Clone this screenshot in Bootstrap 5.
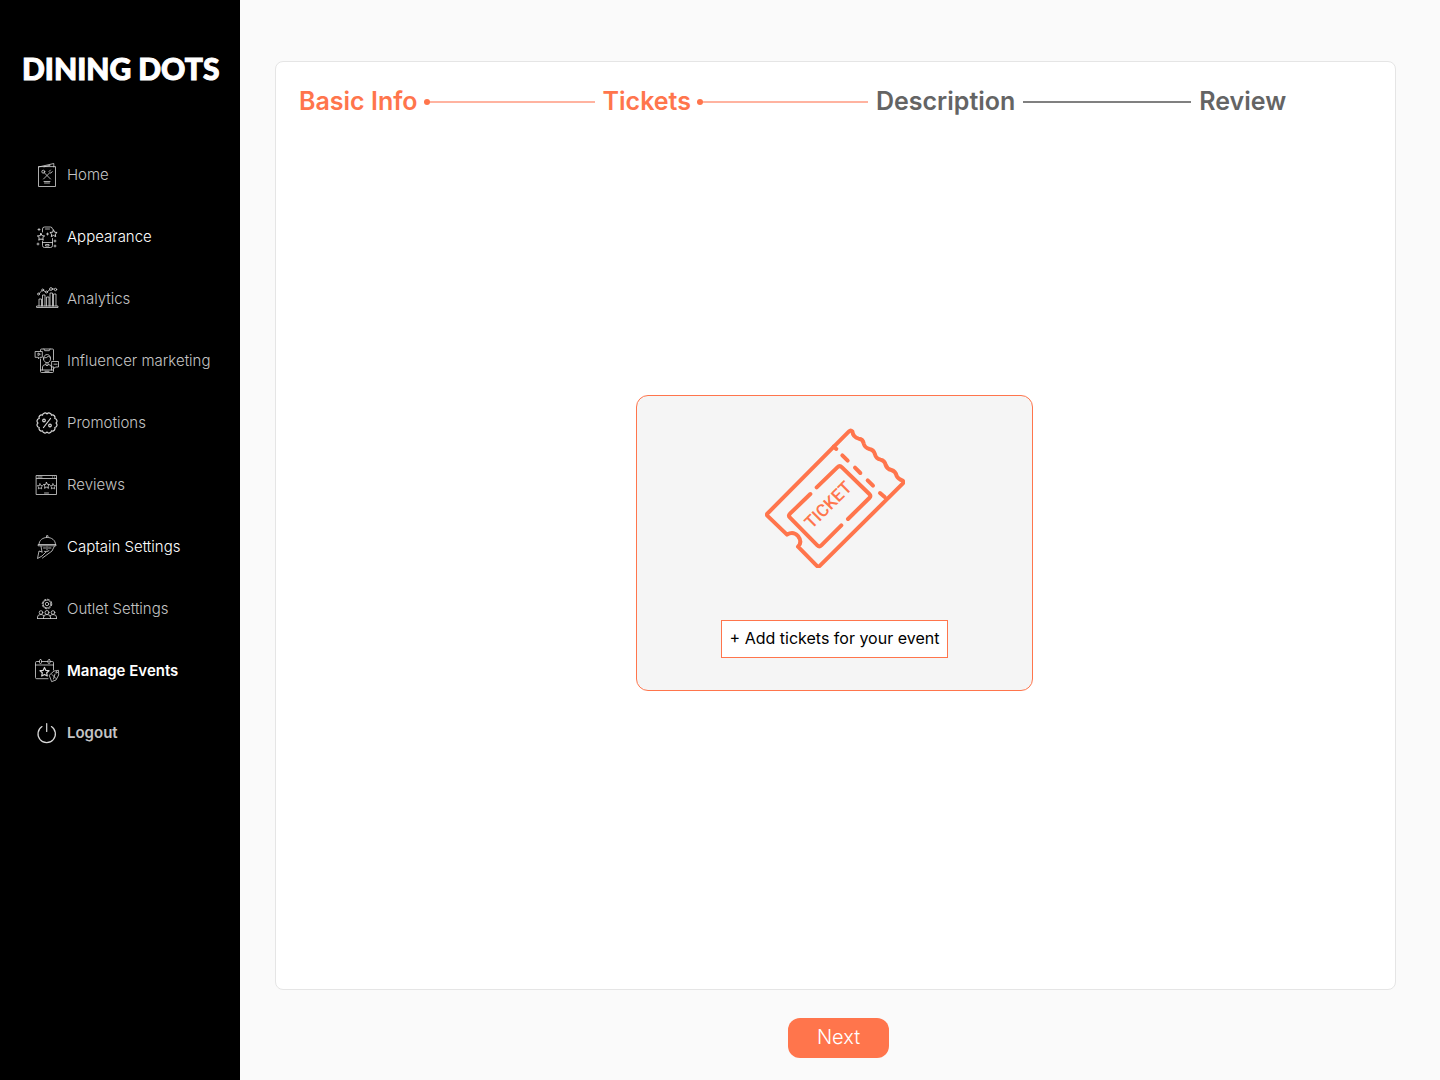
<!DOCTYPE html>
<html lang="en">
<head>
<meta charset="utf-8">
<meta name="viewport" content="width=device-width, initial-scale=1">
<title>Dining Dots – Manage Events</title>
<link rel="stylesheet" href="https://cdn.jsdelivr.net/npm/bootstrap@5.3.0/dist/css/bootstrap.min.css">
<style>
  :root { --brand: #ff754c; --brand-soft: #ffb3a0; }
  body { font-family: Inter, "Liberation Sans", sans-serif; background: #fafafa; }
  .sidebar { width: 240px; background: #000; }
  .brand { font: 900 30px/36px Lato, sans-serif; color: #fff; -webkit-text-stroke: 1px #fff; padding: 50px 22px 58px; white-space: nowrap; }
  .side-link { height: 62px; padding: 0 0 0 34px; gap: 7px; font-size: 15px; font-weight: 300; color: #c4c4c4; }
  .side-link:hover, .side-link.bright { color: #fff; }
  .side-link.strong { font-weight: 600; }
  .side-link svg { width: 26px; height: 26px; flex: none; fill: none; stroke: #d8d8d8; stroke-width: .8; stroke-linecap: round; stroke-linejoin: round; }
  .side-link svg.thick { stroke-width: 1.2; }
  .workspace { padding: 61px 44px 22px 35px; min-width: 0; }
  .panel { border: 1px solid #e5e5e5; border-radius: 8px; padding: 20px 25px 24px 23px; }
  .steps { font-size: 25px; line-height: 38px; font-weight: 600; color: #646464; gap: 8px; }
  .steps .done { color: var(--brand); }
  .connector { flex: 0 1 168px; height: 2px; background: #808080; margin-top: 2px; }
  .connector.dotted { flex-basis: 171px; background: var(--brand-soft); display: flex; align-items: center; margin-left: -2px; }
  .connector.dotted::before { content: ""; width: 6px; height: 6px; border-radius: 50%; background: var(--brand); }
  .ticket-box { width: 397px; height: 296px; border: 1px solid var(--brand); border-radius: 12px; background: #f5f5f5; padding: 32px 0; }
  .ticket-art { width: 140px; height: 140px; fill: none; stroke: var(--brand); stroke-width: 12; stroke-linecap: round; stroke-linejoin: round; }
  .ticket-art text { font: 500 52px Roboto, sans-serif; fill: var(--brand); stroke: none; text-anchor: middle; }
  .add-btn { border: 1px solid var(--brand); background: #fff; color: #000; font-size: 16px; line-height: 24px; padding: 5px 7px 7px; border-radius: 0; min-width: 227px; white-space: nowrap; }
  .next-btn { width: 101px; height: 40px; padding: 0 0 2px; border-radius: 12px; background: var(--brand); color: #fff; font-size: 20px; font-weight: 300; }
  .add-btn:hover { background: #fff4f0; }
  .next-btn:hover { background: #f2663c; color: #fff; }
  .actions { padding: 28px 0 0 6px; }
</style>
<script src="https://cdn.jsdelivr.net/npm/bootstrap@5.3.0/dist/js/bootstrap.bundle.min.js"></script>
</head>
<body>
<svg class="d-none" aria-hidden="true">
  <symbol id="star" viewBox="-5 -5 10 10" overflow="visible"><path stroke-width="1.2" d="M0-4.500 1.400-1.600 4.500-1.300 2.200.8 2.800 4 0 2.400-2.800 4-2.200.8-4.500-1.300-1.400-1.600Z"/></symbol>
</svg>
<div class="d-flex min-vh-100">
  <aside class="sidebar flex-shrink-0">
    <div class="brand">DINING DOTS</div>
    <nav class="nav flex-column flex-nowrap" aria-label="Main">
      <a href="#" class="nav-link side-link d-flex align-items-center"><svg viewBox="0 0 26 26"><path d="M4.500 5v19.500h17V5ZM4.500 5 19.800 1.500V5M10 4.800 16 3.300M9.500 10l7 7M16.500 10l-7 7M10 19.500h6M10.500 21h5"/><circle cx="9.300" cy="9.700" r="1.500"/><path d="M15 9.500 16.500 8M16.700 11.200 18.300 9.700"/></svg><span>Home</span></a>
      <a href="#" class="nav-link side-link bright d-flex align-items-center"><svg viewBox="0 0 26 26"><path d="M8.500 8V5q0-2 2-2h6q2 0 2 2M8.500 17.500v4q0 2 2 2h6q2 0 2-2v-7M8.500 18.500h10M11.500 5h4M12 20.500h3v1.500h-3ZM4 5.500h2M5 4.500v2M3 20h2M4 19v2M21 16v2M20 17h2M21 21v2M20 22h2M12.500 10h2M13.500 9v2"/><use href="#star" x="3" y="9" width="8" height="8"/><use href="#star" x="15.500" y="5.500" width="8" height="8"/></svg><span>Appearance</span></a>
      <a href="#" class="nav-link side-link d-flex align-items-center"><svg viewBox="0 0 26 26"><path d="M3 20h21v1.500H3ZM5 20v-7h2.500v7M8.500 20V9H11v11M12.500 20v-9H15v9M16 20V7h2.500v13M19.500 20V8H22v12M5.200 7.500l2.800-3M9.500 4.500l2 1.500M13.500 5.500l2.200-1.700M18.300 3h1.700"/><circle cx="4.500" cy="8" r="1"/><circle cx="8.700" cy="4" r="1"/><circle cx="12.500" cy="6" r="1"/><circle cx="17" cy="3" r="1.400"/><circle cx="21.500" cy="3.500" r="1.200"/></svg><span>Analytics</span></a>
      <a href="#" class="nav-link side-link d-flex align-items-center"><svg viewBox="0 0 26 26"><path d="M6.500 3V2q0-1 1-1h11q1 0 1 1v10M6.500 11v12.500q0 1 1 1h11q1 0 1-1V20M10 1l.7 1.700h4.600L16 1M6.500 22h13M11 23.300h4M8.500 22v-3q0-2 3-2.500l1.500 1.500 1.500-1.500q3 .5 3 2.500v3M9.500 11c-.5-6 7.500-6 7 0-.3 5-6.500 5-7 0ZM9.500 10q4 0 5-2 1 1.500 2 2M12 15v2M14 15v2"/><path d="M1.500 3.500h6.800v5.800H6l-1.500 1.500V9.300h-3ZM18 13.500h6.500v5.500h-3L20 20.500V19h-2ZM4 5.300v2.200l2-1.100ZM20 16.200h3"/></svg><span>Influencer marketing</span></a>
      <a href="#" class="nav-link side-link d-flex align-items-center"><svg class="thick" viewBox="0 0 26 26"><path d="M22 13A2.500 2.500 0 0 1 20.800 17.500 2.500 2.500 0 0 1 17.500 20.800 2.500 2.500 0 0 1 13 22 2.500 2.500 0 0 1 8.500 20.800 2.500 2.500 0 0 1 5.200 17.500 2.500 2.500 0 0 1 4 13 2.500 2.500 0 0 1 5.200 8.500 2.500 2.500 0 0 1 8.500 5.200 2.500 2.500 0 0 1 13 4 2.500 2.500 0 0 1 17.500 5.200 2.500 2.500 0 0 1 20.800 8.500 2.500 2.500 0 0 1 22 13ZM16.500 8.500l-7 9"/><circle cx="10" cy="10.500" r="1.300"/><circle cx="16" cy="15.500" r="1.300"/></svg><span>Promotions</span></a>
      <a href="#" class="nav-link side-link d-flex align-items-center"><svg viewBox="0 0 26 26"><path d="M2.500 3.500h20v19h-20ZM2.500 6.500h20M4 5h4M18.500 5h.2M20.500 5h.2M10.500 21h4"/><use href="#star" x="3" y="11.500" width="6" height="6"/><use href="#star" x="9" y="10" width="7" height="7"/><use href="#star" x="16" y="11.500" width="6" height="6"/></svg><span>Reviews</span></a>
      <a href="#" class="nav-link side-link bright d-flex align-items-center"><svg viewBox="0 0 26 26"><path d="M5 10.500c0-9.500 16.500-9.500 16.500 0M4.500 10.500h17.500v1.300H4.500ZM12.500 3.200V1.700h1.500v1.500M20.500 12 18 17l-9.500 7M7 12l1 6M8 18l-3-1-1.500 7.500 4.500-2.500 4-4M9.500 14h2M14.500 14h2.500M13 13v3M10.500 17.500q2.500 1 4.500-.8"/></svg><span>Captain Settings</span></a>
      <a href="#" class="nav-link side-link d-flex align-items-center"><svg viewBox="0 0 26 26"><circle cx="13" cy="8" r="4"/><circle cx="13" cy="8" r="1.700"/><circle cx="13" cy="8" r="4.800" stroke-dasharray="1.800 1.970"/><circle cx="7" cy="16.500" r="1.800"/><circle cx="13" cy="16.500" r="2"/><circle cx="19" cy="16.500" r="1.800"/><path d="M3.500 22.500v-1.500q0-2.500 3.500-2.500 2.200 0 3 1.500M22.500 22.500v-1.500q0-2.500-3.500-2.500-2.200 0-3 1.500M9.500 22.500v-1.500q0-2.500 3.500-2.500t3.500 2.500v1.500M3.500 22.500h19"/></svg><span>Outlet Settings</span></a>
      <a href="#" class="nav-link side-link bright strong d-flex align-items-center" aria-current="page"><svg viewBox="0 0 26 26"><path d="M5.500 3.500H2.700q-1.200 0-1.200 1.200v14.800q0 1.200 1.200 1.200H14M7.500 3.500H14M16 3.500h2.300q1.200 0 1.200 1.200V12M1.500 7h18"/><rect x="5.500" y="1.500" width="2" height="4" rx="1"/><rect x="14" y="1.500" width="2" height="4" rx="1"/><use href="#star" x="5.500" y="9" width="10" height="10"/><path d="m15.500 17 4.500-4 4.500-.7.200 4.700-2.700 5-4 1.500ZM18 16.500l4 4M21 16l-1.500 5"/><circle cx="22.500" cy="14.300" r=".7"/></svg><span>Manage Events</span></a>
      <a href="#" class="nav-link side-link strong d-flex align-items-center"><svg class="thick" viewBox="0 0 26 26"><path d="M12.700 3.500v8M8 6.600a8.700 8.700 0 1 0 9.400 0"/></svg><span>Logout</span></a>
    </nav>
  </aside>
  <main class="workspace d-flex flex-column flex-grow-1">
    <section class="panel bg-white d-flex flex-column flex-grow-1">
      <div class="steps d-flex align-items-center">
        <span class="done text-nowrap">Basic Info</span><span class="connector dotted"></span>
        <span class="done">Tickets</span><span class="connector dotted"></span>
        <span>Description</span><span class="connector"></span>
        <span>Review</span>
      </div>
      <div class="d-flex flex-grow-1 align-items-center justify-content-center">
        <div class="ticket-box d-flex flex-column align-items-center justify-content-between">
          <svg class="ticket-art" viewBox="45 38 420 420" aria-hidden="true">
            <path d="M51 296 297 48q5-5 10 0 2 18 19 22 13 1 15 14 3 13 17 17 13 2 17 16 3 13 17 16 12 2 15 16 4 12 17 15 13 4 16 18 4 9 18 14 4 4 0 9L210 451q-5 5-10 0L144 394q14-14 0-32-15-16-33-4L51 300Z"/>
            <path d="M251 94 259 101M277 120l16 16M315 157l16 16M353 195l16 16M390 233l14 12"/>
            <path d="m200 216 62-60q7-7 14 0l82 80q6 6 0 12l-64 63M274 330l-60 60q-6 6-12 0l-82-83q-6-6 0-12l61-59"/>
            <text transform="translate(247 281) rotate(-45)">TICKET</text>
          </svg>
          <button type="button" class="btn add-btn">+ Add tickets for your event</button>
        </div>
      </div>
    </section>
    <div class="actions d-flex justify-content-center">
      <button type="button" class="btn next-btn">Next</button>
    </div>
  </main>
</div>
</body>
</html>
